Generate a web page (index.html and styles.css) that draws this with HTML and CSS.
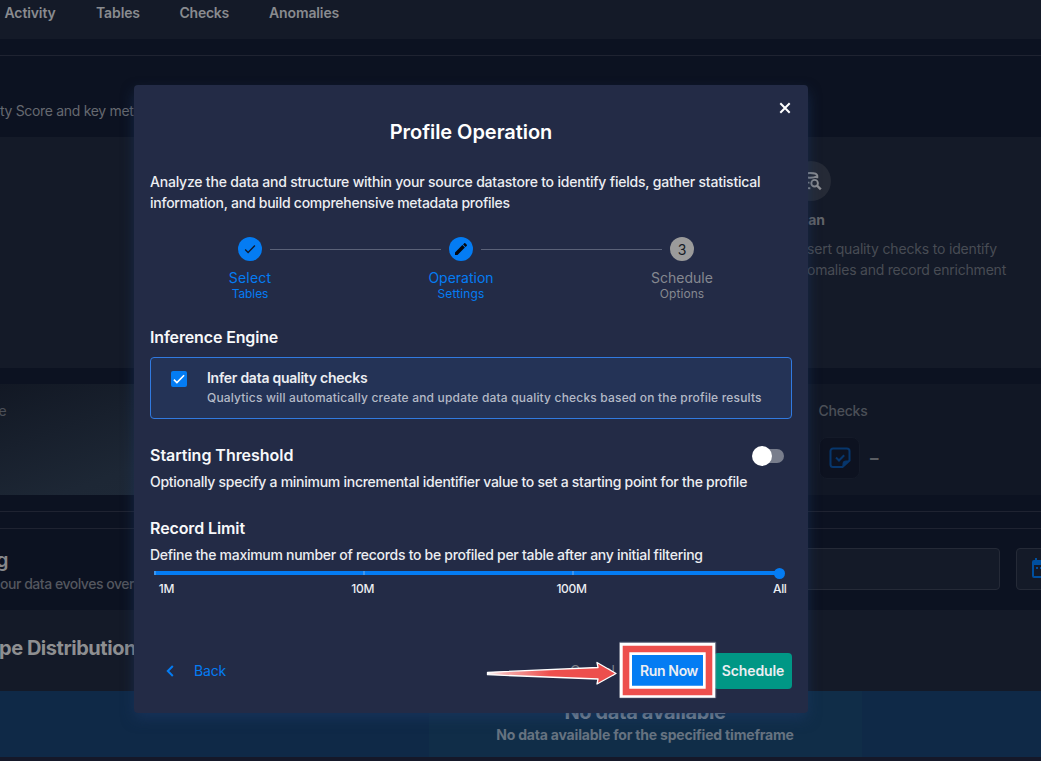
FILE: index.html
```
<!DOCTYPE html>
<html lang="en">
<head>
<meta charset="utf-8">
<title>Profile Operation</title>
<link rel="stylesheet" href="styles.css">
</head>
<body>
<div class="page">
  <nav class="nav">
    <a class="nav-activity">Activity</a>
    <a class="nav-tables">Tables</a>
    <a class="nav-checks">Checks</a>
    <a class="nav-anomalies">Anomalies</a>
  </nav>
  <header class="intro"><p>ty Score and key metrics</p></header>
  <section class="operations">
    <div class="scan">
      <div class="scan-icon">
        <svg width="20" height="20" viewBox="0 0 20 20" fill="none" stroke="#8c8e93" stroke-width="1.9">
          <path d="M1.300 4.600c0-3.500 13.500-3.500 14 0v2.600M1.300 4.600c2 2.800 10 2.800 14 .500M1.300 4.600V15c0 1.500 3 2.300 7 2.300M1.300 10c1 1.300 4 1.800 6.200 1.600"/>
          <circle cx="12.600" cy="12.200" r="3.300"/>
          <path d="m15 14.600 3.800 3.800" stroke-width="2.300"/>
        </svg>
      </div>
      <h4><span>Sc</span>an</h4>
      <p class="scan-line1">sert quality checks to identify</p>
      <p class="scan-line2">omalies and record enrichment</p>
    </div>
  </section>
  <section class="metrics">
    <div class="metric-score">e</div>
    <div class="metric-checks">
      <h5>Checks</h5>
      <div class="metric-value">
        <div class="metric-icon">
          <svg width="22" height="22" viewBox="0 0 22 22" fill="none" stroke="#07366c" stroke-width="2">
            <path d="M13.500 20H4a2.500 2.500 0 0 1-2.500-2.500V4A2.500 2.500 0 0 1 4 1.500h14A2.500 2.500 0 0 1 20.500 4v9.500Z"/>
            <path d="M14 20v-3.500a2.500 2.500 0 0 1 2.500-2.500H20Z" fill="#07366c" stroke-width="1"/>
            <path d="m7 10.500 3 3 5.200-5.200"/>
          </svg>
        </div>
        <span>–</span>
      </div>
    </div>
  </section>
  <section class="profiling">
    <div class="profiling-title">
      <h2>g</h2>
      <p>our data evolves over</p>
    </div>
    <div class="field"></div>
    <div class="date-button">
      <svg width="22" height="22" viewBox="0 0 22 22">
        <path fill="#004f9e" fill-rule="evenodd" d="M4 1h2v2h10V1h2v2h1a2 2 0 0 1 2 2v14a2 2 0 0 1-2 2H3a2 2 0 0 1-2-2V5a2 2 0 0 1 2-2h1ZM3 8v11h16V8ZM5 10h2v2H5ZM9 10h2v2H9ZM13 10h2v2h-2Z"/>
      </svg>
    </div>
  </section>
  <section class="distribution"><h2>pe Distribution</h2></section>
  <section class="empty">
    <div class="empty-message">
      <h3>No data available</h3>
      <p>No data available for the specified timeframe</p>
    </div>
  </section>
  <div class="page-end"></div>
</div>

<main class="modal">
  <svg class="close" width="12" height="12" viewBox="0 0 12 12" stroke="#fff" stroke-width="2"><path d="m1.300 1.300 9.400 9.400M10.700 1.300l-9.400 9.400"/></svg>
  <h1>Profile Operation</h1>
  <p class="description"><span class="desc-first">Analyze the data and structure within your source datastore to identify fields, gather statistical</span><br><span class="desc-second">information, and build comprehensive metadata profiles</span></p>
  <div class="stepper">
    <div class="step">
      <div class="dot"><svg width="12" height="12" viewBox="0 0 12 12" fill="none" stroke="#111a2d" stroke-width="1.400"><path d="m1.200 6.500 2.900 2.900L10.900 2.600"/></svg></div>
      <b class="t-select">Select</b><small>Tables</small>
    </div>
    <i class="line line-a"></i>
    <div class="step">
      <div class="dot"><svg width="12" height="12" viewBox="3 3 18 18" fill="#05080e"><path d="M20.710 7.040c.390-.390.390-1.040 0-1.410l-2.340-2.340c-.370-.390-1.020-.390-1.410 0l-1.840 1.830 3.750 3.750M3 17.250V21h3.750L17.810 9.930l-3.750-3.750Z"/></svg></div>
      <b>Operation</b><small class="t-settings">Settings</small>
    </div>
    <i class="line line-b"></i>
    <div class="step pending">
      <div class="dot">3</div>
      <b>Schedule</b><small class="t-options">Options</small>
    </div>
  </div>
  <h3 class="t-inference">Inference Engine</h3>
  <div class="option">
    <div class="checkbox"><svg width="12" height="12" viewBox="0 0 12 12" fill="none" stroke="#fff" stroke-width="1.600"><path d="m.900 6.600 3 3L11.100 2.300"/></svg></div>
    <div>
      <h4>Infer data quality checks</h4>
      <p>Qualytics will automatically create and update data quality checks based on the profile results</p>
    </div>
  </div>
  <div class="threshold">
    <h3>Starting Threshold</h3>
    <div class="switch"><i></i></div>
  </div>
  <p class="hint">Optionally specify a minimum incremental identifier value to set a starting point for the profile</p>
  <h3 class="t-record">Record Limit</h3>
  <p class="hint">Define the maximum number of records to be profiled per table after any initial filtering</p>
  <div class="slider"><i></i><i></i><i></i><b></b></div>
  <div class="ticks"><span>1M</span><span>10M</span><span>100M</span><span>All</span></div>
  <footer>
    <svg width="8" height="12" viewBox="0 0 8 12" fill="none" stroke="#047cf3" stroke-width="2"><path d="M6.800 1 1.800 6l5 5"/></svg>
    <span class="back">Back</span>
    <span class="cancel">Cancel</span>
    <div class="button run">Run Now</div>
    <div class="button schedule">Schedule</div>
  </footer>
</main>

<svg class="annotation" width="234" height="60" viewBox="484 640 234 60">
  <defs>
    <linearGradient id="fade" gradientUnits="userSpaceOnUse" x1="488" y1="673" x2="550" y2="673">
      <stop offset="0" stop-color="#fff"/><stop offset=".25" stop-color="#f6b0af"/><stop offset="1" stop-color="#ed4f4d"/>
    </linearGradient>
  </defs>
  <path d="M487.500 672.300 598 667.500l-1-5 19 11-19 10.500 1-5-110.500-4.300Z" fill="url(#fade)" stroke="#fff" stroke-width="1.300" stroke-linejoin="round"/>
  <g fill="none">
    <path d="M619.750 642.250h96v55.500h-96Z" stroke="#8b91a2" stroke-width=".6"/>
    <path d="M625.500 648.500h84v43.500h-84Z" stroke="#fff" stroke-width="11.500"/>
    <path d="M630.500 653.500h74v33.700h-74Z" stroke="#fff" stroke-width="3"/>
    <path d="M626 649h83v43h-83Z" stroke="#ed4f4d" stroke-width="6.600"/>
  </g>
</svg>
</body>
</html>
```
FILE: styles.css
```
* { box-sizing: border-box; }
body {
  margin: 0;
  width: 1041px;
  height: 761px;
  overflow: hidden;
  background: #0c1221;
  color: #eceef2;
  font-family: Inter, sans-serif;
  font-size: 14px;
}
h1, h2, h3, h4, h5, p { margin: 0; white-space: nowrap; font-weight: 600; }
svg { flex: none; display: block; }
i { display: block; flex: none; }

/* Dimmed page behind the dialog */
.page { height: 761px; overflow: hidden; display: flex; flex-direction: column; }
.page > * { flex: none; }
.nav {
  height: 39px;
  padding-left: 4.500px;
  display: flex;
  background: #141a28;
  color: #898b8f;
  font-weight: 600;
  line-height: 26px;
  letter-spacing: -0.120px;
}
.nav-activity { width: 91.500px; }
.nav-tables { width: 83.500px; }
.nav-checks { width: 89.500px; letter-spacing: -0.240px; }
.intro {
  height: 82px;
  margin-top: 16px;
  padding-top: 45px;
  border-top: 1px solid #1f2331;
}
.intro p { line-height: 20px; font-weight: 400; color: #666970; letter-spacing: -0.320px; }
.operations { height: 231px; padding: 24px 0 0 791px; background: #141a28; }
.scan-icon {
  width: 40px;
  height: 40px;
  border-radius: 50%;
  background: #252a36;
  display: flex;
  align-items: center;
  justify-content: center;
}
.scan-icon svg { margin-left: 2px; }
.scan h4 { margin-top: 9px; line-height: 20px; font-weight: 700; color: #626469; letter-spacing: -0.100px; }
.scan p { padding-left: 16px; line-height: 21px; color: #484c54; font-weight: 400; }
.scan-line1 { margin-top: 8px; letter-spacing: -0.173px; }
.scan-line2 { letter-spacing: -0.222px; }
.metrics {
  height: 111px;
  margin-top: 16px;
  display: flex;
  background: #111725;
}
.metric-score {
  width: 300px;
  padding-top: 18px;
  line-height: 18px;
  color: #4b4f57;
  text-indent: -1.500px;
  background: linear-gradient(160deg, #121824 0%, #1d2735 60%, #1f2a38 100%);
}
.metric-checks { padding: 17px 0 0 518.500px; }
.metric-checks h5 { font-size: 14px; font-weight: 500; line-height: 20px; color: #4b4f57; letter-spacing: -0.230px; }
.metric-value { display: flex; align-items: center; margin: 16px 0 0 .500px; gap: 10px; color: #5a5d63; font-size: 17px; font-weight: 700; }
.metric-icon {
  width: 41px;
  height: 42px;
  border: 1px solid #141a28;
  border-radius: 8px;
  background: #0d1220;
  display: flex;
  align-items: center;
  justify-content: center;
}
.profiling {
  height: 99px;
  margin-top: 16px;
  border-top: 1px solid #1f2331;
  display: flex;
  align-items: flex-start;
  position: relative;
}
.profiling > * { flex: none; }
.profiling::before { content: ""; position: absolute; top: 16px; left: 0; right: 0; border-top: 1px solid #1f2331; }
.profiling-title { width: 400px; padding-top: 34px; }
.profiling-title h2 { font-size: 20px; line-height: 28px; color: #85878b; text-indent: -4px; }
.profiling-title p { line-height: 20px; font-weight: 500; color: #54575f; letter-spacing: -0.470px; }
.field { width: 600px; height: 42px; margin-top: 36px; border: 1px solid #252a37; border-radius: 4px; background: #141a28; }
.date-button {
  width: 120px;
  height: 42px;
  margin: 36px 0 0 16px;
  padding: 8px 14px;
  border: 1px solid #252a37;
  border-radius: 4px;
  background: #141a28;
}
.distribution { height: 81px; padding-top: 23px; background: #141a28; }
.distribution h2 { font-size: 20px; line-height: 30px; font-weight: 700; color: #8e8f91; letter-spacing: -0.460px; text-indent: -1px; }
.empty { height: 66px; display: flex; background: #0f2947; }
.empty-message { width: 433px; margin-left: 429px; padding-top: 8px; text-align: center; background: #102d48; }
.empty h3 { font-size: 20px; line-height: 26px; font-weight: 700; color: #8e979f; letter-spacing: -0.370px; text-indent: -1px; }
.empty p { line-height: 20px; font-weight: 700; color: #667381; letter-spacing: -0.193px; text-indent: -1px; }
.page-end { height: 4px; background: #151829; }

/* Dialog */
.modal {
  position: absolute;
  left: 134px;
  top: 85px;
  width: 674px;
  height: 628px;
  padding: 32px 16px 0;
  border-radius: 4px;
  background: #232b46;
  box-shadow: 0 6px 14px -1px rgba(27, 55, 100, .65);
}
.close { position: absolute; right: 17px; top: 17px; }
.modal h1 { font-size: 20px; line-height: 30px; text-align: center; color: #fff; letter-spacing: -0.055px; }
.description { margin-top: 24px; line-height: 21px; font-weight: 500; }
.desc-first { letter-spacing: -0.207px; }
.desc-second { letter-spacing: -0.252px; }
.stepper { display: flex; height: 65px; margin-top: 24px; padding-left: 60px; }
.step { width: 80px; flex: none; display: flex; flex-direction: column; align-items: center; color: #047cf3; }
.step b { margin-top: 7px; font-weight: 400; line-height: 20px; }
.step small { margin-top: -2px; font-size: 12px; line-height: 16px; letter-spacing: -0.100px; }
.step .t-select { letter-spacing: .200px; }
.step .t-settings { letter-spacing: .130px; }
.step .t-options { letter-spacing: .070px; }
.dot { width: 24px; height: 24px; border-radius: 50%; background: #047cf3; display: flex; align-items: center; justify-content: center; }
.pending { color: #858890; }
.pending .dot { background: #9b9b9b; color: #161b25; }
.line { height: 1px; margin: 12px -20px 0; background: #5b6278; }
.line-a { width: 171px; }
.line-b { width: 181px; }
.modal h3 { font-size: 16px; line-height: 24px; color: #f7f8fa; letter-spacing: -0.030px; }
.modal .t-inference { margin-top: 23px; letter-spacing: -0.145px; }
.modal .t-record { margin-top: 24px; letter-spacing: -0.104px; }
.option {
  height: 62px;
  margin-top: 8px;
  padding: 10px 20px;
  display: flex;
  gap: 20px;
  border: 1px solid #317ae0;
  border-radius: 4px;
  background: #243356;
}
.checkbox { width: 16px; height: 16px; margin-top: 3px; border-radius: 2px; background: #047cf3; display: flex; align-items: center; justify-content: center; }
.option h4 { line-height: 20px; letter-spacing: -0.255px; }
.option p { line-height: 20px; font-size: 12px; font-weight: 500; color: #b4bac7; letter-spacing: .178px; }
.threshold { margin-top: 24px; display: flex; justify-content: space-between; align-items: center; height: 24px; }
.switch { width: 28px; height: 14px; margin: 1px 8px 0 0; border-radius: 7px; background: #787d8c; display: flex; align-items: center; }
.switch i { width: 20px; height: 20px; margin-left: -4px; border-radius: 50%; background: #fff; }
.hint { margin-top: 5px; line-height: 20px; font-weight: 500; letter-spacing: -0.266px; }
.t-record + .hint { letter-spacing: -0.287px; }
.slider { width: 626px; height: 4px; margin: 6px 0 0 4px; display: flex; align-items: center; background: #047cf3; }
.slider i { width: 2px; height: 4px; margin-right: 207px; background: #3c95ef; }
.slider b { width: 11px; height: 11px; margin-left: -7px; border-radius: 50%; background: #047cf3; flex: none; }
.ticks { height: 16px; margin-top: 6px; display: grid; grid-template-columns: 24px 370px 48px 1fr; font-size: 12px; font-weight: 500; line-height: 16px; letter-spacing: -0.350px; text-align: right; }
.ticks span:nth-child(2) { padding-right: 170px; }
.ticks span:nth-child(3) { padding-right: 5.500px; }
.ticks span:nth-child(4) { padding-right: 5.500px; }
.modal footer { height: 36px; margin-top: 56px; padding-left: 16px; display: flex; align-items: center; }
.modal footer > * { flex: none; }
.back { width: 376px; height: 19px; padding-left: 20px; color: #047cf3; letter-spacing: -0.170px; }
.cancel { width: 45px; height: 19px; margin-left: 20px; color: #7b7f89; letter-spacing: -0.200px; }
.button { height: 36px; border-radius: 4px; line-height: 36px; text-align: center; font-weight: 600; }
.run { width: 76px; margin-left: 16px; background: #047cf3; letter-spacing: -0.360px; }
.schedule { width: 78px; margin-left: 7px; background: #009785; letter-spacing: -0.108px; }
.annotation { position: absolute; left: 484px; top: 640px; }
```
